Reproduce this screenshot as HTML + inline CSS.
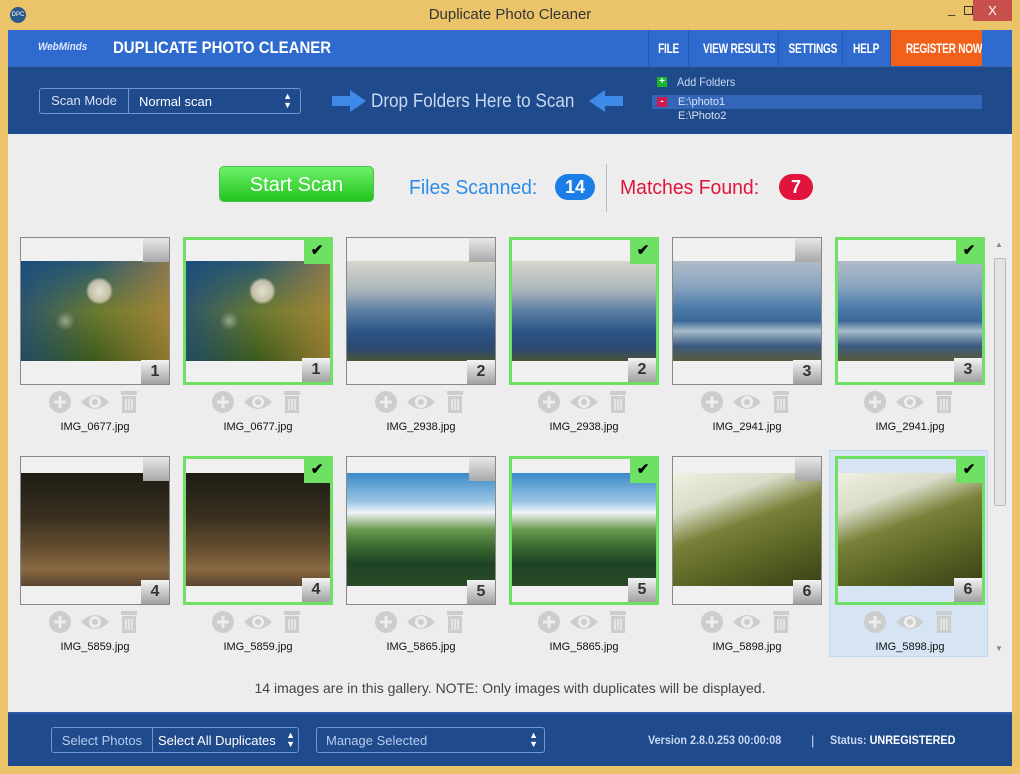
<!DOCTYPE html>
<html><head><meta charset="utf-8"><style>
*{box-sizing:border-box;margin:0;padding:0}
body{width:1020px;height:774px;background:#ebc46a;font-family:"Liberation Sans",sans-serif;position:relative;overflow:hidden}
.abs{position:absolute}
.nar{display:inline-block;transform:scaleX(.78);transform-origin:left center;white-space:nowrap}
.title{left:0;top:0;width:1020px;height:30px;text-align:center;line-height:30px;font-size:15px;color:#333}
.hdr{left:8px;top:30px;width:1004px;height:36px;background:#2f6bcf}
.band{left:8px;top:66px;width:1004px;height:68px;background:#1f4a8c;border-top:1px solid #3a68b0}
.gray{left:8px;top:134px;width:1004px;height:578px;background:#ededed}
.foot{left:8px;top:712px;width:1004px;height:54px;background:#1f4a8c;border-top:2px solid #2a5aa8}
.menu{top:30px;height:36px;line-height:36px;color:#fff;font-size:14px;font-weight:bold;text-align:center;border-left:1px solid #2656a8;white-space:nowrap;overflow:hidden}
.menu span{display:inline-block;transform:scaleX(.72);letter-spacing:-0.3px}
.tile{position:absolute;width:150px;background:#f0f0f0;border:1px solid #888}
.tile.on{border:3px solid #6ee063}
.img{position:absolute;left:0;width:100%}
.cb{position:absolute;right:0;top:0;width:26px;height:24px;background:linear-gradient(#e8e8e8,#a8a8a8)}
.on .cb{background:#6ee063;color:#000;font-size:15px;text-align:center;line-height:22px;font-weight:bold}
.num{position:absolute;right:0;bottom:0;width:28px;height:24px;background:linear-gradient(#f4f4f4,#a0a0a0);font-weight:bold;font-size:16px;color:#333;text-align:center;line-height:24px}
.ic{position:absolute;width:150px;height:26px}
.fn{position:absolute;width:150px;text-align:center;font-size:11px;color:#111}
.dd{border:1px solid #6f95d6;border-radius:3px;height:26px;color:#fff;font-size:14px}
</style></head><body>
<div class="abs title">Duplicate Photo Cleaner</div>
<div class="abs" style="left:10px;top:7px;width:16px;height:16px;border-radius:50%;background:#2a5a8a;color:#fff;font-size:6px;line-height:16px;text-align:center">DPC</div>
<div class="abs" style="left:948px;top:7px;font-size:13px;color:#333">&#8211;</div>
<div class="abs" style="left:964px;top:6px;width:9px;height:9px;border:1px solid #333"></div>
<div class="abs" style="left:973px;top:0;width:39px;height:21px;background:#c7504d;color:#fff;text-align:center;line-height:21px;font-size:13px">X</div>
<div class="abs hdr"></div>
<div class="abs" style="left:38px;top:41px;color:#dfe8ff;font-size:11px;font-weight:bold;font-style:italic"><span class="nar" style="transform:scaleX(.9)">WebMinds</span></div>
<div class="abs" style="left:113px;top:38px;color:#fff;font-size:17px;font-weight:bold"><span class="nar" style="transform:scaleX(.88)">DUPLICATE PHOTO CLEANER</span></div>
<div class="abs menu" style="left:648px;width:40px"><span>FILE</span></div>
<div class="abs menu" style="left:688px;width:90px"><span>VIEW RESULTS</span></div>
<div class="abs menu" style="left:778px;width:64px"><span>SETTINGS</span></div>
<div class="abs menu" style="left:842px;width:48px"><span>HELP</span></div>
<div class="abs menu" style="left:890px;width:92px;background:#f2601a"><span>REGISTER NOW</span></div>
<div class="abs band"></div>
<div class="abs dd" style="left:39px;top:88px;width:262px"><span style="position:absolute;left:0;top:0;width:89px;height:24px;border-right:1px solid #6f95d6;line-height:24px;text-align:center;color:#d8e2f4;font-size:13px">Scan Mode</span><span style="position:absolute;left:99px;top:0;line-height:26px;font-size:13px">Normal scan</span><span style="position:absolute;right:8px;top:3px;font-size:9px;line-height:9px">▲<br>▼</span></div>
<svg class="abs" style="left:332px;top:90px" width="34" height="22"><path d="M0 6h18V0l16 11-16 11v-6H0z" fill="#3f8ae8"/></svg>
<div class="abs" style="left:371px;top:91px;color:#c8d8f2;font-size:19px"><span class="nar" style="transform:scaleX(.9)">Drop Folders Here to Scan</span></div>
<svg class="abs" style="left:589px;top:90px" width="34" height="22"><path d="M34 6H16V0L0 11l16 11v-6h18z" fill="#3f8ae8"/></svg>
<div class="abs" style="left:657px;top:77px;width:10px;height:10px;background:#18b82a;color:#fff;font-size:10px;line-height:10px;text-align:center;font-weight:bold">+</div>
<div class="abs" style="left:677px;top:75px;color:#c8d8f2;font-size:12px"><span class="nar" style="transform:scaleX(.9)">Add Folders</span></div>
<div class="abs" style="left:652px;top:95px;width:330px;height:14px;background:#3466b8"></div>
<div class="abs" style="left:657px;top:97px;width:10px;height:10px;background:#d0184a;color:#fff;font-size:10px;line-height:9px;text-align:center;font-weight:bold">-</div>
<div class="abs" style="left:678px;top:96px;color:#d8e2f4;font-size:11px">E:\photo1</div>
<div class="abs" style="left:678px;top:110px;color:#d8e2f4;font-size:11px">E:\Photo2</div>
<div class="abs gray"></div>
<div class="abs" style="left:219px;top:166px;width:155px;height:36px;border-radius:5px;background:linear-gradient(#6ef06a,#22c41e);color:#fff;font-size:20px;text-align:center;line-height:36px;border:1px solid #4bc04a">Start Scan</div>
<div class="abs" style="left:409px;top:177px;color:#2d8ce8;font-size:20px"><span class="nar" style="transform:scaleX(.97)">Files Scanned:</span></div>
<div class="abs" style="left:555px;top:174px;width:40px;height:26px;border-radius:13px;background:#1a7ee6;color:#fff;font-weight:bold;font-size:18px;text-align:center;line-height:26px">14</div>
<div class="abs" style="left:606px;top:164px;width:1px;height:48px;background:#bbb"></div>
<div class="abs" style="left:620px;top:177px;color:#e0143c;font-size:20px"><span class="nar" style="transform:scaleX(.97)">Matches Found:</span></div>
<div class="abs" style="left:779px;top:174px;width:34px;height:26px;border-radius:13px;background:#e0143c;color:#fff;font-weight:bold;font-size:18px;text-align:center;line-height:26px">7</div>
<div class="abs" style="left:829px;top:450px;width:159px;height:207px;background:#d6e4f4;border:1px solid #c4d6ec"></div>
<div class="abs" style="left:993px;top:237px;width:14px;height:420px;background:#ededed"></div>
<div class="abs" style="left:995px;top:240px;font-size:8px;color:#888">▲</div>
<div class="abs" style="left:995px;top:644px;font-size:8px;color:#888">▼</div>
<div class="abs" style="left:994px;top:258px;width:12px;height:248px;background:#e4e4e4;border:1px solid #bbb;border-radius:2px"></div>
<div id="tiles"></div>
<div class="abs" style="left:0;top:680px;width:1020px;text-align:center;font-size:14px;color:#444">14 images are in this gallery. NOTE: Only images with duplicates will be displayed.</div>
<div class="abs foot"></div>
<div class="abs dd" style="left:51px;top:727px;width:248px"><span style="position:absolute;left:0;top:0;width:101px;height:24px;border-right:1px solid #6f95d6;line-height:26px;text-align:center;color:#b8cbee;font-size:13px">Select Photos</span><span style="position:absolute;left:106px;top:0;line-height:26px;font-size:13px">Select All Duplicates</span><span style="position:absolute;right:3px;top:3px;font-size:9px;line-height:9px">▲<br>▼</span></div>
<div class="abs dd" style="left:316px;top:727px;width:229px"><span style="position:absolute;left:9px;top:0;line-height:26px;font-size:13px;color:#b8cbee">Manage Selected</span><span style="position:absolute;right:6px;top:3px;font-size:9px;line-height:9px">▲<br>▼</span></div>
<div class="abs" style="left:648px;top:733px;color:#c8d8f2;font-size:12px;font-weight:bold"><span class="nar" style="transform:scaleX(.9)">Version 2.8.0.253 00:00:08</span></div>
<div class="abs" style="left:811px;top:733px;color:#c8d8f2;font-size:13px">|</div>
<div class="abs" style="left:830px;top:733px;color:#c8d8f2;font-size:12px;font-weight:bold"><span class="nar" style="transform:scaleX(.9)">Status: <span style="color:#fff">UNREGISTERED</span></span></div>
<script>
var xs=[20,183,346,509,672,835];
var bg={
d:"radial-gradient(circle at 53% 30%,rgba(235,230,215,.95) 0,rgba(220,210,190,.8) 10%,rgba(0,0,0,0) 13%),radial-gradient(circle at 30% 60%,rgba(200,210,180,.6) 0,rgba(0,0,0,0) 8%),linear-gradient(90deg,rgba(20,70,130,.7),rgba(0,0,0,0) 50%,rgba(200,140,60,.6)),linear-gradient(#2a5a70,#6a7a30 50%,#3d5a1a)",
m:"linear-gradient(#d8d6cc 0%,#a8b4bc 30%,#5c7ea4 50%,#2e5686 70%,#2c4870 88%,#4a5438 100%)",
m3:"linear-gradient(#b0bcc8 0%,#8aa4c0 25%,#4a7aa8 48%,#3c6a98 60%,#a8bccc 70%,#3a5a80 85%,#5a5a3a 100%)",
f:"linear-gradient(#1e1c14 0%,#3a3020 40%,#6a5234 70%,#8a6a44 85%,#5a4430 100%)",
h:"linear-gradient(#3a8ac8 0%,#9ac4e4 25%,#f0f4f8 35%,#6a9a50 50%,#3a6a30 65%,#1e4424 80%,#2a4a28 100%)",
g:"linear-gradient(160deg,#f0f0e0 0%,#d8dcc8 25%,#7a8038 45%,#5a6424 70%,#3a4018 100%)"};
var rows=[{t:237,h:148,it:24,ih:100,ic:389,fn:421,imgs:["d","d","m","m","m3","m3"],n:[1,1,2,2,3,3],f:["IMG_0677.jpg","IMG_0677.jpg","IMG_2938.jpg","IMG_2938.jpg","IMG_2941.jpg","IMG_2941.jpg"]},
{t:456,h:149,it:17,ih:113,ic:609,fn:641,imgs:["f","f","h","h","g","g"],n:[4,4,5,5,6,6],f:["IMG_5859.jpg","IMG_5859.jpg","IMG_5865.jpg","IMG_5865.jpg","IMG_5898.jpg","IMG_5898.jpg"]}];
var icon='<svg width="150" height="26"><circle cx="40" cy="13" r="11" fill="#cdcdcd"/><path d="M40 7v12M34 13h12" stroke="#ededed" stroke-width="3"/><path d="M61 13q14-14 28 0q-14 14-28 0z" fill="#cdcdcd"/><circle cx="75" cy="13" r="6" fill="#ededed"/><circle cx="75" cy="13" r="3" fill="#cdcdcd"/><rect x="101" y="2" width="16" height="4" fill="#cdcdcd"/><rect x="102" y="7" width="14" height="17" fill="#cdcdcd"/><path d="M106 10v11M109 10v11M112 10v11" stroke="#ededed" stroke-width="1.5"/></svg>';
var h='';
rows.forEach(function(r){xs.forEach(function(x,i){var on=i%2==1;var b=on?3:1;
h+='<div class="tile'+(on?' on':'')+'" style="left:'+x+'px;top:'+r.t+'px;height:'+r.h+'px;'+(i==5&&r.t>400?'background:#d6e4f4;':'')+'"><div class="img" style="top:'+(r.it-b)+'px;height:'+r.ih+'px;background:'+bg[r.imgs[i]]+'"></div><div class="cb">'+(on?'✔':'')+'</div><div class="num">'+r.n[i]+'</div></div>';
h+='<div class="ic" style="left:'+x+'px;top:'+r.ic+'px">'+icon+'</div><div class="fn" style="left:'+x+'px;top:'+r.fn+'px">'+r.f[i]+'</div>';});});
document.getElementById('tiles').innerHTML=h;
</script>
</body></html>
